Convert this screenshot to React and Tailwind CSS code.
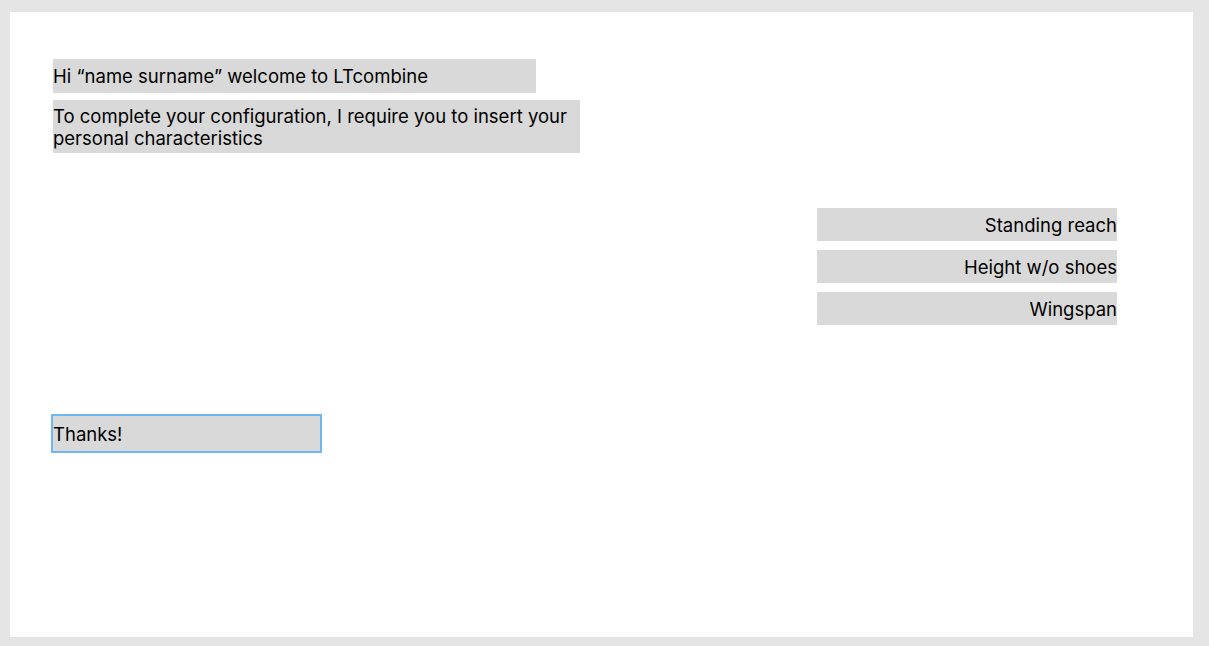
export default function App() {
  return (
    <div className="h-[646px] w-full bg-[#e5e5e5] pl-[10px] pt-[12px] pr-[16px] pb-[9px] font-['Inter',sans-serif] text-[18.5px] leading-[22px] text-black">
      <div className="flex h-full flex-col bg-white pl-[43px] pt-[47px] pr-[76px]">
        <div className="flex h-[34px] w-[483px] items-center bg-[#d9d9d9]">
          Hi “name surname” welcome to LTcombine
        </div>
        <div className="mt-[7px] h-[53px] w-[527px] bg-[#d9d9d9] pt-[5px]">
          To complete your configuration, I require you to insert your personal characteristics
        </div>

        {/* measurements */}
        <div className="mt-[55px] flex w-[300px] flex-col gap-[9px] self-end">
          {["Standing reach", "Height w/o shoes", "Wingspan"].map((label) => (
            <div key={label} className="flex h-[33px] items-center justify-end bg-[#d9d9d9] pt-[1px]">
              {label}
            </div>
          ))}
        </div>

        <div className="ml-[-2px] mt-[89px] flex h-[39px] w-[271px] items-center border-2 border-[#6cb8f7] bg-[#d9d9d9] pt-[1px]">
          Thanks!
        </div>
      </div>
    </div>
  );
}
